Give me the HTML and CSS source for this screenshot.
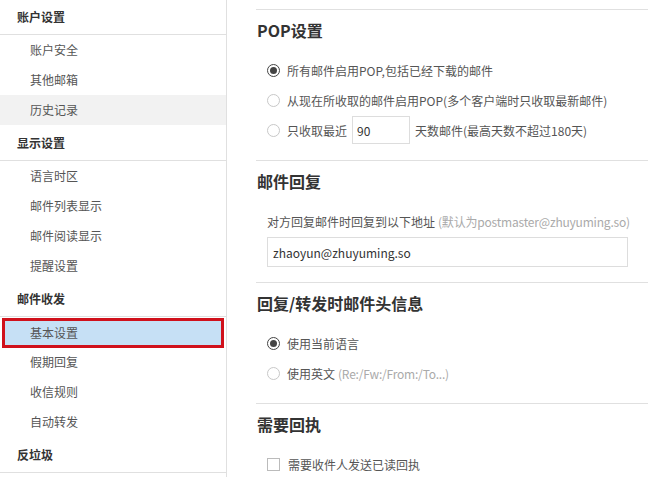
FILE: index.html
```html
<!DOCTYPE html>
<html lang="zh-CN">
<head>
  <meta charset="UTF-8" />
  <title>邮箱设置 - 基本设置</title>
  <link rel="stylesheet" href="styles.css">
</head>
<body>
  <div class="page">
    <div class="sidebar">
      <div class="nav-group">账户设置</div>
      <div class="nav-item">账户安全</div>
      <div class="nav-item">其他邮箱</div>
      <div class="nav-item hover">历史记录</div>

      <div class="nav-group">显示设置</div>
      <div class="nav-item">语言时区</div>
      <div class="nav-item">邮件列表显示</div>
      <div class="nav-item">邮件阅读显示</div>
      <div class="nav-item">提醒设置</div>

      <div class="nav-group">邮件收发</div>
      <div class="nav-item active">基本设置</div>
      <div class="nav-item">假期回复</div>
      <div class="nav-item">收信规则</div>
      <div class="nav-item">自动转发</div>

      <div class="nav-group">反垃圾</div>
    </div>

    <div class="main">
      <div class="section">
        <h2>POP设置</h2>
        <div class="row"><span class="radio checked"></span>所有邮件启用POP,包括已经下载的邮件</div>
        <div class="row"><span class="radio"></span>从现在所收取的邮件启用POP(多个客户端时只收取最新邮件)</div>
        <div class="row"><span class="radio"></span>只收取最近<input class="days" type="text" value="90">天数邮件(最高天数不超过180天)</div>
      </div>

      <div class="section">
        <h2>邮件回复</h2>
        <div class="row">对方回复邮件时回复到以下地址 <span class="hint">(默认为postmaster@zhuyuming.so)</span></div>
        <input class="reply" type="text" value="zhaoyun@zhuyuming.so">
      </div>

      <div class="section">
        <h2>回复/转发时邮件头信息</h2>
        <div class="row"><span class="radio checked"></span>使用当前语言</div>
        <div class="row"><span class="radio"></span>使用英文 <span class="hint">(Re:/Fw:/From:/To...)</span></div>
      </div>

      <div class="section">
        <h2>需要回执</h2>
        <div class="row"><span class="checkbox"></span>需要收件人发送已读回执</div>
      </div>
    </div>
  </div>
</body>
</html>
```

FILE: styles.css
```css
body {
  margin: 0;
  font-family: "Noto Sans CJK SC", "Noto Sans", sans-serif;
  font-size: 12px;
  color: #555;
  background-color: white;
  overflow: hidden;
}
.page {
  display: flex;
  align-items: flex-start;
}
.sidebar {
  width: 226px;
  border-right: 1px solid #e0e0e0;
  margin-top: -1px;
  min-height: 490px;
}
.nav-group {
  height: 35px;
  line-height: 36px;
  padding-left: 17px;
  font-weight: bold;
  color: #333;
  border-bottom: 1px solid #e0e0e0;
}
.nav-item {
  height: 30px;
  line-height: 30px;
  padding-left: 30px;
}
.nav-item.hover {
  background-color: #f2f2f2;
}
.nav-item.active {
  background-color: #c6e0f5;
  outline: 3px solid #d0111b;
  outline-offset: -3px;
  margin: 1px 2px -1px 2px;
  padding-left: 28px;
}
.main {
  flex: 1;
  margin-left: 29px;
  margin-top: 9px;
}
.section {
  border-top: 1px solid #e0e0e0;
  padding: 9px 0 15px 0;
}
.section h2 {
  margin: 0 0 14px 1px;
  font-size: 16px;
  line-height: 22px;
  color: #333;
}
.row {
  display: flex;
  align-items: center;
  height: 30px;
  padding-left: 11px;
  white-space: nowrap;
}
.hint {
  color: #aaa;
  margin-left: 3px;
  letter-spacing: -0.2px;
}
.radio {
  width: 11px;
  height: 11px;
  border: 1px solid #c8c8c8;
  border-radius: 50%;
  margin-right: 7px;
  position: relative;
}
.radio.checked {
  border-color: #444;
}
.radio.checked::after {
  content: "";
  position: absolute;
  left: 2px;
  top: 2px;
  width: 7px;
  height: 7px;
  border-radius: 50%;
  background-color: #444;
}
.checkbox {
  width: 11px;
  height: 11px;
  border: 1px solid #bbb;
  margin-right: 8px;
}
input {
  font-family: inherit;
  font-size: 12px;
  color: #333;
  border: 1px solid #ddd;
  box-sizing: border-box;
  outline: none;
}
.days {
  width: 58px;
  height: 28px;
  margin: 0 5px;
  padding: 0 4px;
}
.reply {
  display: block;
  width: 361px;
  height: 30px;
  margin: 1px 0 0 11px;
  padding: 0 5px;
}
```
